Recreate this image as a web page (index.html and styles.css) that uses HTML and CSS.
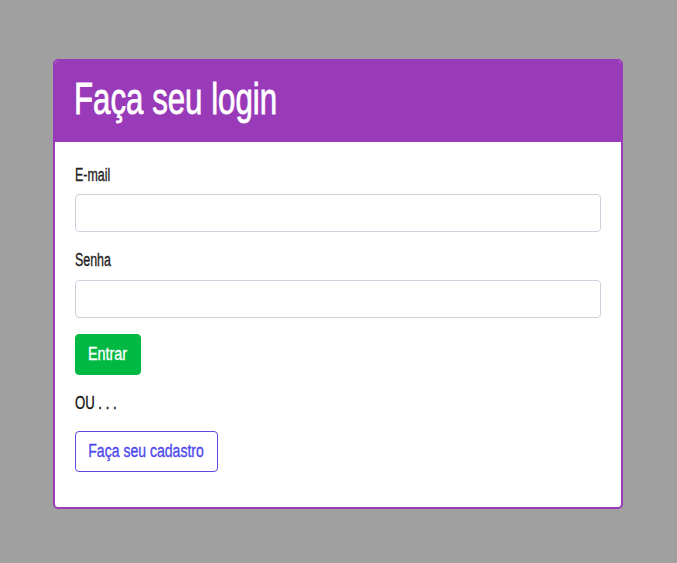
FILE: index.html
```html
<!DOCTYPE html>
<html lang="pt-BR">
<head>
<meta charset="utf-8">
<title>Login</title>
<link rel="stylesheet" href="styles.css">
</head>
<body>
<div class="page">
  <div class="card">
    <div class="card-header">
      <h1 class="title"><span class="nt sx-title">Faça seu login</span></h1>
    </div>
    <form class="card-body">
      <label class="label" for="email"><span class="nt sx-label">E-mail</span></label>
      <input class="input" id="email" type="email">
      <label class="label label-2" for="senha"><span class="nt sx-label">Senha</span></label>
      <input class="input" id="senha" type="password">
      <div class="row"><button type="button" class="btn btn-green"><span class="nt sx-btn">Entrar</span></button></div>
      <p class="ou"><span class="nt sx-ou">OU . . .</span></p>
      <div class="row"><button type="button" class="btn btn-outline"><span class="nt sx-btn2">Faça seu cadastro</span></button></div>
    </form>
  </div>
</div>
</body>
</html>
```
FILE: styles.css
```css
* { box-sizing: border-box; }
html, body { margin: 0; padding: 0; }
body {
  background: #a0a0a0;
  font-family: "Liberation Sans", Arial, sans-serif;
  color: #222;
}
.nt {
  display: inline-block;
  white-space: nowrap;
  transform-origin: left center;
  -webkit-text-stroke: 0.35px currentColor;
}
.sx-title { transform: scaleX(0.71); -webkit-text-stroke: 0.8px currentColor; }
.sx-label { transform: scaleX(0.69); }
.sx-ou { transform: scaleX(0.73); }
.sx-btn { transform: scaleX(0.8); transform-origin: center; }
.sx-btn2 { transform: scaleX(0.78); transform-origin: center; }
.page {
  padding: 59px 54px 54px 53px;
}
.card {
  width: 570px;
  height: 450px;
  background: #fff;
  border: 2px solid #993ab9;
  border-radius: 5px;
  overflow: hidden;
}
.card-header {
  background: #993ab9;
  height: 83px;
  margin: -2px -2px 0 -2px;
  padding: 12px 20px 0 21px;
}
.title {
  margin: 0;
  font-weight: 400;
  font-size: 44px;
  line-height: 56px;
  color: #fff;
}
.card-body {
  display: flex;
  flex-direction: column;
  padding: 22px 20px 0 20px;
}
.label {
  font-size: 18px;
  line-height: 22px;
  color: #222;
  margin-bottom: 8px;
}
.label-2 { margin-bottom: 9px; }
.input {
  height: 38px;
  border: 1px solid #cdd2dc;
  border-radius: 4px;
  margin: 0 0 17px 0;
  padding: 0 10px;
  font: inherit;
}
#senha { margin-bottom: 16px; }
.row { display: flex; }
.btn {
  font: inherit;
  font-size: 18px;
  height: 41px;
  padding: 0;
  border-radius: 4px;
  display: flex;
  align-items: center;
  justify-content: center;
  cursor: pointer;
}
.btn-green {
  width: 66px;
  background: #00b942;
  border: 1px solid #00b942;
  color: #fff;
}
.ou {
  margin: 17px 0 17px 0;
  font-size: 18px;
  line-height: 22px;
  color: #111;
}
.btn-outline {
  width: 143px;
  background: #fff;
  border: 1px solid #5a4ae0;
  color: #4f48ec;
}
```
